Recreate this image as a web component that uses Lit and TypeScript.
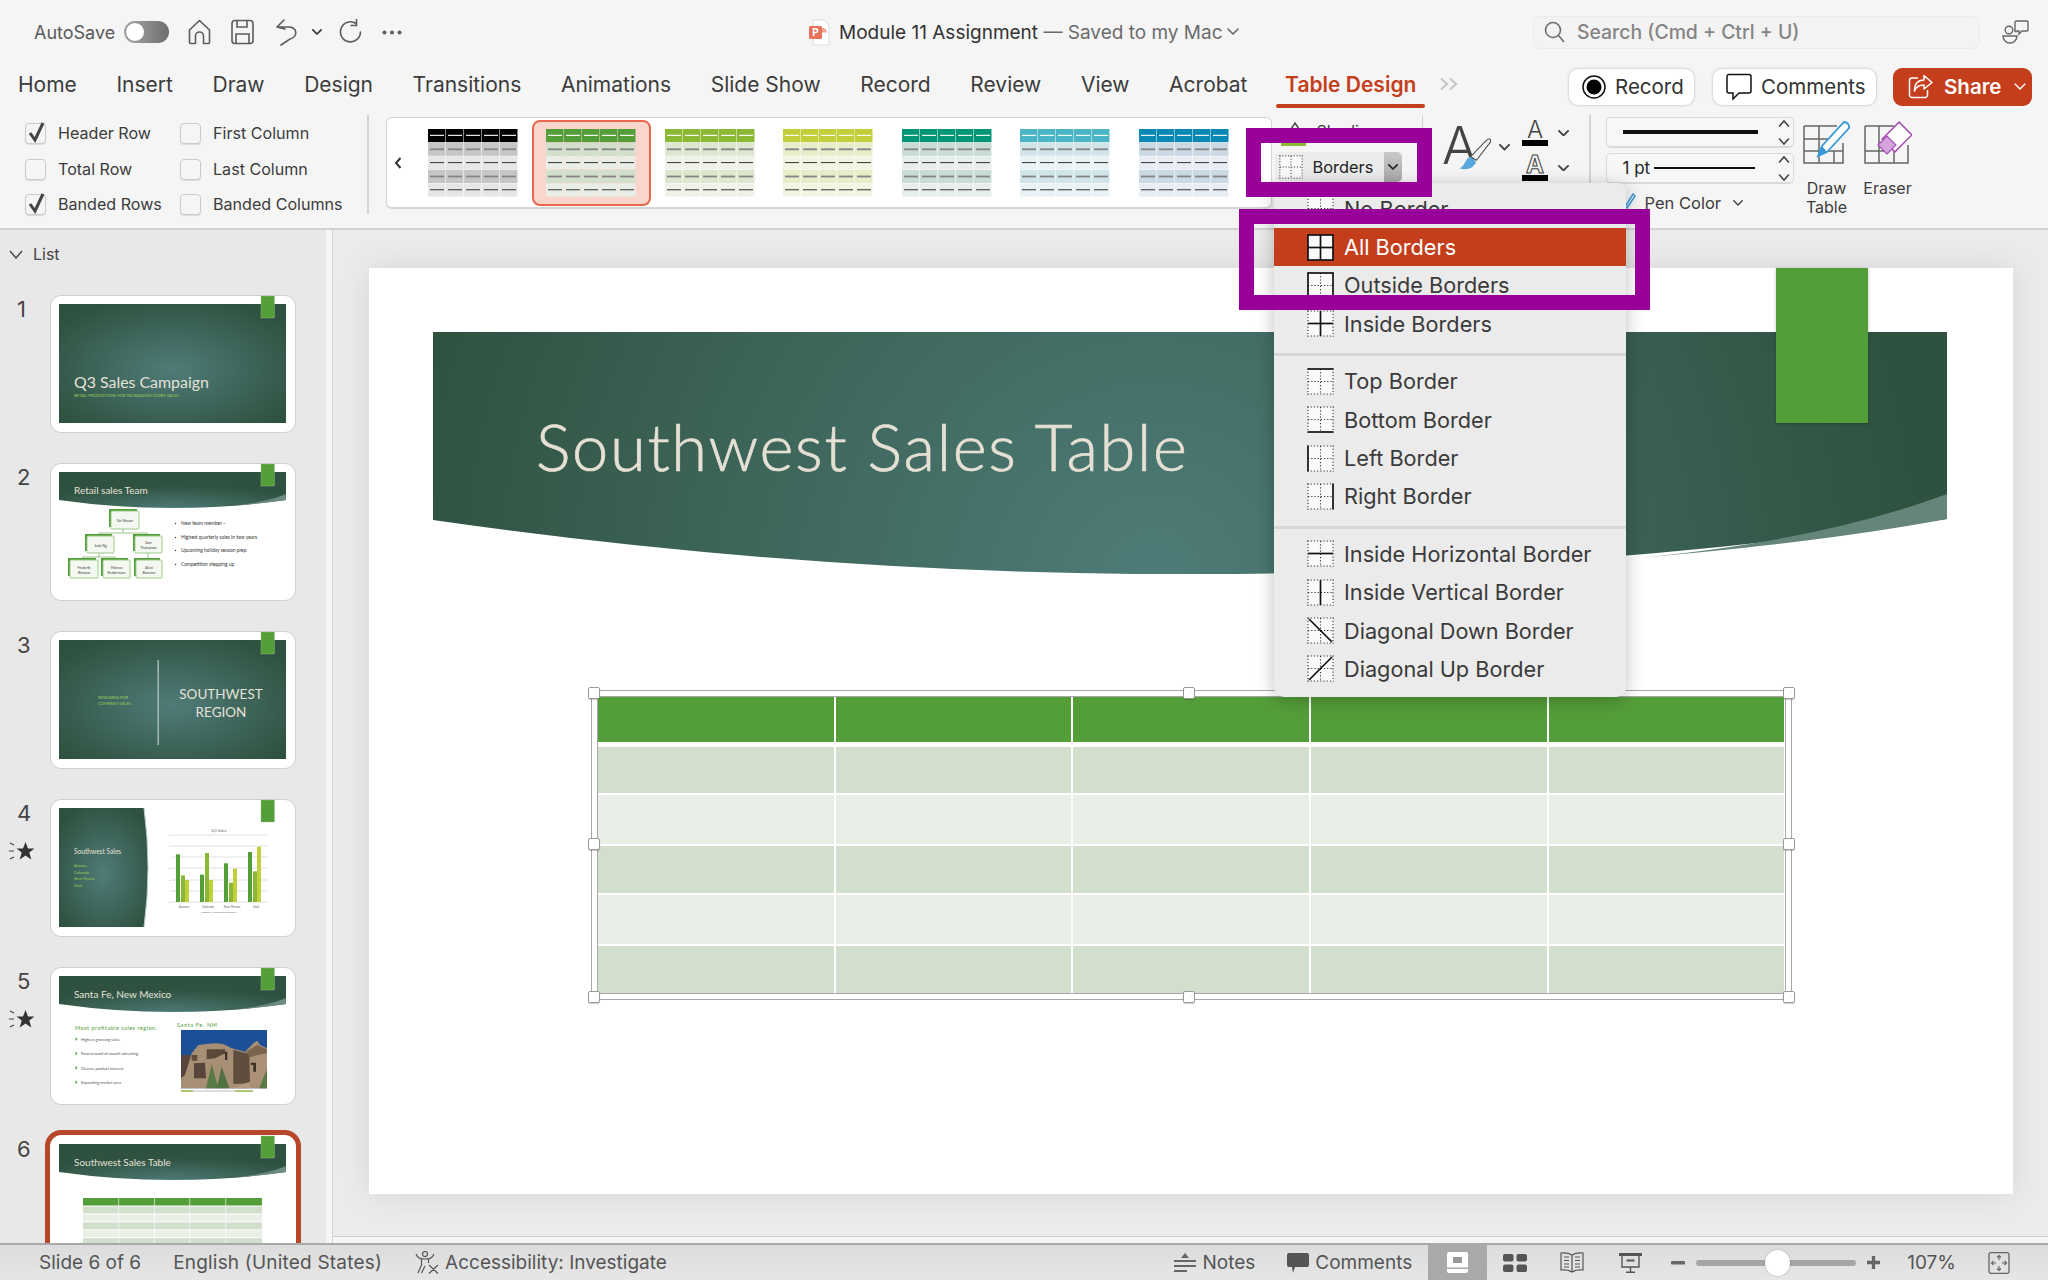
import { LitElement, html, svg, css } from "lit";
import { customElement } from "lit/decorators.js";

const TABS = ["Home","Insert","Draw","Design","Transitions","Animations","Slide Show","Record","Review","View","Acrobat"];
const STYLES = [
  ["#000000","#c6c6c6","#e6e6e6"],
  ["#549e39","#d2dfcd","#e9efe7"],
  ["#8ab833","#dde6ce","#eef2e8"],
  ["#c0cf3a","#e8ecc9","#f3f5e3"],
  ["#029676","#cadcd6","#e7eeeb"],
  ["#4ab5c4","#d0e4ea","#e9f2f5"],
  ["#0989b1","#cbd9e4","#e7edf2"],
];
const tableThumb = (c: string[]) => html`<svg class="tthumb" viewBox="0 0 90 68" width="90" height="68">
  ${[0,1,2,3,4].map(r => svg`${[0,1,2,3,4].map(k => svg`<rect x="${k*18}" y="${r*13.6}" width="17.5" height="13.2" fill="${r===0?c[0]:r%2?c[1]:c[2]}"/>
      <rect x="${k*18+2}" y="${r*13.6+5.8}" width="14" height="${r%2?1.8:1.1}" fill="${r===0?'#fff':r%2?'#858585':'#444'}"/>`)}`)}
</svg>`;

const borderIcon = (solid: string) => {
  const has = (k: string) => solid.includes(k);
  const ln = (k: string, x1: number, y1: number, x2: number, y2: number) =>
    has(k) ? svg`<line x1="${x1}" y1="${y1}" x2="${x2}" y2="${y2}" stroke="#111" stroke-width="1.7"/>`
           : (k==="d"||k==="u") ? null
           : svg`<line x1="${x1}" y1="${y1}" x2="${x2}" y2="${y2}" stroke="#333" stroke-width="1.100" stroke-dasharray="1.200 2"/>`;
  return html`<svg class="bicon" viewBox="0 0 27 27" width="27" height="27">
    <rect x="1" y="1" width="25" height="25" fill="#fafafa"/>
    ${ln("H",1,13.5,26,13.5)}${ln("V",13.5,1,13.5,26)}
    ${ln("T",0.5,1,26.5,1)}${ln("B",0.5,26,26.5,26)}${ln("L",1,0.5,1,26.5)}${ln("R",26,0.5,26,26.5)}
    ${ln("d",2,2,25,25)}${ln("u",25,2,2,25)}
  </svg>`;
};

const MENU: [string, string][][] = [
  [["No Border",""],["All Borders","TBLRHV"],["Outside Borders","TBLR"],["Inside Borders","HV"]],
  [["Top Border","T"],["Bottom Border","B"],["Left Border","L"],["Right Border","R"]],
  [["Inside Horizontal Border","H"],["Inside Vertical Border","V"],["Diagonal Down Border","d"],["Diagonal Up Border","u"]],
];

const chev = (w = 12, color = "#444", sw = 1.8) => html`<svg class="chev" width="${w}" height="${w*0.6}" viewBox="0 0 12 7.2"><path d="M1 1l5 5 5-5" fill="none" stroke="${color}" stroke-width="${sw}" stroke-linecap="round" stroke-linejoin="round"/></svg>`;
const spin = () => html`<svg class="spin" width="12" height="30" viewBox="0 0 12 30"><path d="M1.5 8l4.5-5 4.5 5M1.5 21l4.5 5 4.5-5" fill="none" stroke="#444" stroke-width="1.6" stroke-linecap="round"/></svg>`;

const DEFS = svg`<defs>
  <radialGradient id="g1" cx="50%" cy="55%" r="62%"><stop offset="0" stop-color="#4f7b78"/><stop offset="1" stop-color="#2f5240"/></radialGradient>
  <radialGradient id="g2" cx="50%" cy="100%" r="62%"><stop offset="0" stop-color="#4c7873"/><stop offset="1" stop-color="#2f5240"/></radialGradient>
</defs>`;
const TAB = svg`<rect x="202" y="-8" width="13.5" height="22" fill="#549e39" stroke="#9bb98f" stroke-width=".4"/>`;
const band = (title: string) => svg`<path d="M0 0H227V28Q113 44 0 28Z" fill="url(#g2)"/><path d="M170 34Q205 31 227 22V28Q200 32 170 34Z" fill="#6b8a80"/>
  <text x="15" y="22" class="t-title" font-size="10">${title}</text>`;

const orgBox = (x: number, y: number, w: number, h: number, lines: string[]) => svg`
  <rect x="${x-2}" y="${y-2}" width="${w-2}" height="${h-2}" fill="#4f9c38"/>
  <rect x="${x}" y="${y}" width="${w-2}" height="${h-2}" fill="#f3f8f1" stroke="#9ccb8a" stroke-width="1" rx="1"/>
  ${lines.map((l, i) => svg`<text x="${x+(w-2)/2}" y="${y+h/2+(i-(lines.length-1)/2)*5+1}" text-anchor="middle" font-size="3.6" fill="#444" class="t-s">${l}</text>`)}`;

// photo coordinates are measured on the reference crop
const pts = (a: number[]) => { const o: string[] = []; for (let i = 0; i < a.length; i += 2) o.push(`${(a[i]/3+111).toFixed(1)},${(a[i+1]/3+44).toFixed(1)}`); return o.join(" "); };
const poly = (a: number[], fill: string) => svg`<polygon points="${pts(a)}" fill="${fill}"/>`;
const PHOTO = svg`
  ${poly([33,30,291,30,291,205,33,205], "#1d4f96")}
  ${poly([33,105,62,105,62,175,33,175], "#57443a")}
  ${poly([33,205,33,175,45,165,65,100,85,75,110,72,135,70,160,72,185,85,225,95,250,70,262,62,270,75,291,85,291,205], "#a78f76")}
  ${poly([110,88,165,88,165,100,135,115,110,118], "#5a4839")}
  ${poly([65,105,82,105,82,122,65,122], "#5f4c3c")}
  ${poly([72,130,105,128,108,175,72,175], "#57443a")}
  ${poly([190,90,238,102,240,190,190,192], "#5f4d3e")}
  ${poly([228,95,262,75,291,88,291,100,240,112], "#7a644f")}
  ${poly([240,112,291,100,291,205,240,190], "#ab9178")}
  ${poly([242,128,258,128,258,155,250,155,250,135,242,135], "#3d3027")}
  ${poly([160,95,172,95,172,120,165,120,165,100,160,100], "#3d3027")}
  ${poly([180,205,240,185,240,205], "#b19a80")}
  ${poly([108,205,125,132,145,205], "#5a7a44")}
  ${poly([140,205,155,140,178,205], "#4f7040")}
  ${poly([268,205,283,165,291,150,291,205], "#5a7a44")}
  <rect x="122" y="114.500" width="72" height="1" fill="#bbb"/><rect x="122" y="114.500" width="12" height="1.200" fill="#8ab833"/><rect x="176" y="114.500" width="18" height="1.200" fill="#8ab833"/>`;

const slides = [
  svg`<rect width="227" height="119" fill="url(#g1)"/><text x="15" y="84" class="t-title" font-size="15.900">Q3 Sales Campaign</text>
    <text x="15" y="93" font-size="4.2" fill="#9ccb5c" class="t-s">RETAIL PROMOTIONS FOR INCREASING STORE SALES</text>`,
  svg`${band("Retail sales Team")}
    <g stroke="#7fb86a" stroke-width=".8" fill="none"><path d="M64 56v5M40 64v-3h48v3M40 81v4M24 87v-2h32v2M89 81v6"/></g>
    ${orgBox(52,39,30,20,["Siri Novari"])}${orgBox(28,64,29,19,["Judy Ng"])}${orgBox(76,64,29,19,["Sam","Thompson"])}
    ${orgBox(11,88,30,20,["Frederik","Bristow"])}${orgBox(44,88,29,20,["Marcus","Redderman"])}${orgBox(77,88,28,20,["Alexi","Baranov"])}
    ${["New team member –","Highest quarterly sales in two years","Upcoming holiday season prep","Competition stepping up"].map((t,i)=>svg`<circle cx="116.5" cy="${[53,67,80,94][i]-1.500}" r=".7" fill="#333"/><text x="122" y="${[53,67,80,94][i]}" font-size="4.9" fill="#333" class="t-s">${t}</text>`)}`,
  svg`<rect width="227" height="119" fill="url(#g1)"/><rect x="98.5" y="20" width="1.4" height="85" fill="#a8bfba"/>
    <text x="39" y="59" font-size="4.1" fill="#9ccb5c" class="t-s">NEW AREA FOR</text><text x="39" y="65" font-size="4.1" fill="#9ccb5c" class="t-s">COMPANY SALES</text>
    <text x="162" y="59" text-anchor="middle" font-size="13.5" class="t-title">SOUTHWEST</text><text x="162" y="77" text-anchor="middle" font-size="13.5" class="t-title">REGION</text>`,
  svg`<path d="M0 0H85Q93 60 85 119H0Z" fill="url(#g1)"/><path d="M85 0Q93 60 85 119" fill="none" stroke="#b9cbc6" stroke-width="1"/>
    <text x="15" y="46" class="t-title" font-size="6.6">Southwest Sales</text>
    ${["Arizona","Colorado","New Mexico","Utah"].map((t,i)=>svg`<text x="15" y="${59+i*6.7}" font-size="3.8" fill="#9ccb5c" class="t-s">${t}</text>`)}
    <text x="160" y="24" text-anchor="middle" font-size="4" fill="#666" class="t-s">Q3 Sales</text>
    ${[27,38,49,60,72,83,94].map((y,i)=>svg`<rect x="113" y="${y-.6}" width="96" height="1.200" fill="#e4e4e4"/><text x="110" y="${y+1}" font-size="2.6" fill="#777" class="t-s">${6-i}</text>`)}
    ${[[117,703,"#549e39"],[122,766,"#8ab833"],[126,780,"#c0cf3a"],[141,764,"#549e39"],[146,699,"#8ab833"],[150,780,"#c0cf3a"],[165,730,"#549e39"],[170,788,"#8ab833"],[174,746,"#c0cf3a"],[189,696,"#549e39"],[194,754,"#8ab833"],[198,680,"#c0cf3a"]].map(([x,y,c])=>{const t=(y as number)/3+620-808;return svg`<rect x="${x}" y="${t}" width="4" height="${94-t}" fill="${c}"/>`})}
    ${[["Arizona",125],["Colorado",149],["New Mexico",173],["Utah",197]].map(([t,x])=>svg`<text x="${x}" y="100" text-anchor="middle" font-size="3" fill="#666" class="t-s">${t}</text>`)}
    <text x="160" y="105" text-anchor="middle" font-size="2.6" fill="#666" class="t-s">Product A  Product B  Product C</text>`,
  svg`${band("Santa Fe, New Mexico")}
    <text x="16" y="54" font-size="5.6" fill="#549e39" class="t-s" textLength="82">Most profitable sales region.</text>
    <text x="118" y="51" font-size="5.6" fill="#549e39" class="t-s" textLength="40">Santa Fe, NM</text>
    ${["Highest grossing sales.","Fastest word of mouth adverting.","Diverse product interest","Expanding market area"].map((t,i)=>svg`<path d="M16.5 ${61+i*14.4}l2 2-2 2z" fill="#549e39"/><text x="22" y="${65+i*14.4}" font-size="4" fill="#555" class="t-s">${t}</text>`)}
    ${PHOTO}`,
  svg`${band("Southwest Sales Table")}
    <rect x="24" y="54" width="179" height="7.5" fill="#549e39"/>
    ${[0,1,2,3,4,5].map(i=>svg`<rect x="24" y="${62.5+i*7.9}" width="179" height="7" fill="${i%2?'#e9efe7':'#d2dfcd'}"/>`)}
    ${[59.5,95,130.5,166.5].map(x=>svg`<rect x="${x}" y="54" width=".6" height="60" fill="#fff"/>`)}`,
];
const numbers = [1,2,3,4,5,6];

@customElement("app-root")
export class AppRoot extends LitElement {
  static styles = css`
    :host { display: block; width: 2048px; height: 1280px; overflow: hidden; position: relative; background: #f5f5f5;
      font-family: Inter, "Liberation Sans", sans-serif; color: #333; }
    * { box-sizing: border-box; }
    svg { display: block; flex: none; }
    .app { display: flex; flex-direction: column; height: 1280px; }

    .titlebar { height: 60px; display: grid; grid-template-columns: 809px 724px 1fr; align-items: center; padding-top: 4px; }
    .tb-left { display: flex; align-items: center; padding-left: 34px; color: #5a5a5a; font-size: 18px; }
    .toggle { width: 45px; height: 22px; border-radius: 11px; background: linear-gradient(90deg,#aaa,#6d6d6d); margin: 0 19px 0 9px; padding: 1px; position: relative; }
    .toggle i { display: block; width: 20px; height: 20px; border-radius: 50%; background: #fff; border: 1px solid #888; }
    .tb-left .i1 { margin-right: 20px; }
    .tb-left .i2 { margin-right: 22px; }
    .undo-c { margin: 0 17px 0 14px; }
    .tb-center { display: flex; align-items: center; font-size: 19px; gap: 9px; color: #333; }
    .tb-center .saved { color: #6b6b6b; }
    .tb-center .chev { margin-left: -5px; }
    .tb-right { display: flex; align-items: center; }
    .search { width: 447px; height: 33px; border-radius: 8px; background: #f3f3f3; border: 1px solid #ebebeb; display: flex; align-items: center; padding-left: 10px; gap: 12px; color: #858585; font-size: 19.400px; font-weight: 500; }
    .people { margin-left: 22px; }

    .tabs { height: 48px; display: flex; align-items: center; padding-left: 18px; gap: 39.600px; font-size: 21px; color: #3c3c3c; }
    .tab-active { color: #c43e1c; font-weight: 600; position: relative; margin-left: -2px; }
    .tab-active::after { content: ""; position: absolute; left: -9px; right: -9px; bottom: -11px; height: 4px; border-radius: 2px; background: #c43e1c; }
    .more { margin-left: -17px; }
    .actions { margin-left: auto; display: flex; gap: 19px; padding-right: 16px; align-items: center; padding-top: 5px; }
    .abtn { height: 36px; background: #fff; border-radius: 9px; box-shadow: 0 0 3px rgba(0,0,0,.28); display: flex; align-items: center; font-size: 20.500px; padding-left: 13px; gap: 9px; color: #333; }
    .abtn.rec { width: 125px; }
    .abtn.com { width: 163px; }
    .abtn.share { width: 139px; height: 38px; background: #c43e1c; color: #fff; font-weight: 600; padding-left: 15px; gap: 11px; box-shadow: none; margin-left: -2px; }
    .share-c { margin-left: 2px; }

    .ribbon { height: 122px; border-bottom: 2px solid #d2d2d2; display: flex; align-items: flex-start; font-size: 16.100px; color: #3c3c3c; }
    .checks { margin: 15px 0 0 25px; width: 342px; display: grid; grid-template-columns: 155px 1fr; grid-auto-rows: 35.500px; }
    .check { display: flex; align-items: flex-start; gap: 12px; line-height: 21px; height: 21px; }
    .box { width: 21px; height: 21px; border: 1px solid #cbcbcb; border-radius: 4px; background: #f5f5f5; box-shadow: 0 1px 1px rgba(0,0,0,.1); position: relative; }
    .box svg { position: absolute; left: 2px; top: -3px; }
    .vsep { width: 1.500px; height: 99px; background: #d4d4d4; margin-top: 7px; }
    .gallery { width: 886px; height: 92px; margin: 9px 0 0 17px; background: #fff; border: 1px solid #d4d4d4; border-bottom-width: 2px; border-radius: 6px; display: flex; align-items: center; padding-left: 7px; }
    .gchev { width: 20px; }
    .gitem { width: 118.500px; height: 86px; display: flex; align-items: center; justify-content: center; border: 2px solid transparent; border-radius: 8px; }
    .gitem.sel { background: #fad5cc; border-color: #e8674f; }
    .group-b { width: 150px; padding: 12px 0 0 3px; flex: none; }
    .shade { height: 23px; display: flex; align-items: flex-start; gap: 14px; padding-left: 12px; font-size: 16px; line-height: 18px; padding-top: 2px; }
    .gbar { width: 25px; height: 3px; margin-left: 6px; background: #8ab833; }
    .bbtn { width: 127px; height: 30px; margin-top: 6px; border-radius: 5px; background: #ececec; display: flex; align-items: center; padding-left: 4px; }
    .bbtn .bicon { width: 24px; height: 24px; }
    .bbtn span { margin-left: 10px; font-size: 16.400px; width: 71px; color: #222; }
    .bbtn b { width: 18px; height: 30px; background: linear-gradient(#c9c9c9,#a8a8a8); border-radius: 0 5px 5px 0; display: flex; align-items: center; justify-content: center; }
    .quick { width: 166px; position: relative; height: 100px; }
    .abig { position: absolute; left: 19px; top: 12px; font-size: 52px; font-weight: 300; line-height: 1; color: #444; }
    .brush { position: absolute; left: 33px; top: 30px; }
    .qlabel { position: absolute; left: 32px; top: 72px; font-size: 16.500px; }
    .qchev { position: absolute; left: 76px; top: 36px; }
    .acol { position: absolute; left: 99px; top: 12px; display: flex; flex-direction: column; gap: 9px; }
    .aline { display: flex; align-items: center; gap: 10px; }
    .aglyph { width: 26px; font-size: 24px; line-height: 20px; text-align: center; border-bottom: 6px solid #000; height: 26px; color: #444; font-weight: 300; }
    .aglyph.o { color: #f5f5f5; -webkit-text-stroke: 1px #444; font-weight: 700; }
    .lines { width: 188px; margin: 9px 0 0 15px; flex: none; }
    .lbox { height: 31px; background: #f7f7f7; border: 1px solid #dadada; border-bottom-width: 2px; border-radius: 5px; display: flex; align-items: center; padding-left: 16px; position: relative; margin-bottom: 5px; color: #222; font-size: 17px; gap: 4px; }
    .lbox .bar { width: 135px; height: 4px; background: #111; }
    .lbox .bar2 { width: 101px; height: 2px; background: #111; }
    .lbox .spin { position: absolute; right: 3px; top: 0; }
    .pencol { display: flex; align-items: center; margin-top: 9px; padding-left: 18px; gap: 9px; font-size: 16.500px; }
    .pencol .chev { margin-left: 3px; }
    .tool { flex: none; display: flex; flex-direction: column; align-items: center; text-align: center; line-height: 19px; padding-top: 13px; gap: 14px; font-size: 16px; }
    .tool.t1 { width: 48px; margin-left: 9px; }
    .tool.t2 { width: 52px; margin-left: 11px; }

    .body { flex: 1; display: flex; min-height: 0; }
    .panel { width: 326px; background: #e8e8e8; overflow: hidden; flex: none; }
    .pstrip { width: 7px; flex: none; background: #f5f5f5; border-right: 1px solid #d4d4d4; }
    .list { height: 48px; display: flex; align-items: center; padding: 0 0 0 9px; gap: 10px; font-size: 16px; color: #444; }
    .list-pad { height: 17px; }
    .srow { display: flex; height: 168px; }
    .snum { width: 50px; position: relative; font-size: 22px; color: #444; padding-left: 17px; padding-top: 1px; line-height: 26px; }
    .star { position: absolute; left: 9px; top: 42px; }
    .card { width: 246px; height: 138px; background: #fff; border: 1.500px solid #d0d0d0; border-radius: 11px; padding: 7.500px; position: relative; }
    .card.sel { box-shadow: 0 0 0 5px #b7472a; border-color: #fff; }
    .thumb { overflow: visible; }
    .t-title { fill: #e6e2d8; font-family: Lato, sans-serif; font-weight: 400; }
    .t-s { font-family: Lato, sans-serif; }

    .main { flex: 1; min-width: 0; display: flex; flex-direction: column; }
    .canvas { flex: 1; background: #ebebeb; overflow: hidden; padding: 38px 0 0 36px; }
    .slide { width: 1644px; height: 926px; background: #fff; position: relative; box-shadow: 0 0 30px rgba(0,0,0,.09); padding: 64px 0 0 64px; }
    .banner { position: relative; width: 1514px; height: 242px; }
    .title { position: absolute; left: 103px; top: 75px; font-family: Lato, sans-serif; font-weight: 300; -webkit-text-stroke: 0.700px #e6e0d4; font-size: 65px; line-height: 78px; color: #e6e0d4; white-space: nowrap; letter-spacing: 1.650px; }
    .gtab { position: absolute; left: 1407px; top: 0; width: 92px; height: 155px; background: #549e39; box-shadow: 0 1px 3px rgba(0,0,0,.25); }
    .tablewrap { position: relative; margin: 123px 0 0 165px; width: 1188px; }
    .grid { display: grid; grid-template-columns: repeat(5, 235.700px); column-gap: 2px; }
    .cell { background: #d2dfcd; }
    .cell.h { height: 45px; background: #549e39; margin-bottom: 5px; }
    .cell.l { background: #e9efe7; }
    .cell.r1 { height: 46px; margin-bottom: 2px; }
    .cell.r2 { height: 49px; margin-bottom: 2px; }
    .cell.r3 { height: 47px; margin-bottom: 2px; }
    .cell.end { margin-bottom: 0; }
    .frame { position: absolute; left: -7px; top: -7px; right: -6px; bottom: -7px; border: 1px solid #a8a8a8; box-shadow: inset 0 0 0 5px #fff, inset 0 0 0 6px #a8a8a8; }
    .hd { position: absolute; width: 12px; height: 12px; background: #fff; border: 1px solid #999; border-radius: 2px; box-shadow: 0 1px 1px rgba(0,0,0,.2); }
    .hd.x0 { left: -10px; } .hd.x1 { left: 585px; } .hd.x2 { right: -9px; }
    .hd.y0 { top: -10px; } .hd.y1 { top: 141px; } .hd.y2 { bottom: -10px; }
    .mstrip { height: 7px; background: #f5f5f5; border-top: 1px solid #cdcdcd; flex: none; }

    .status { height: 37px; flex: none; border-top: 2px solid #a9a9a9; background: linear-gradient(#dcdcdc,#e6e6e6); display: flex; align-items: center; padding-left: 39px; color: #555; font-size: 19px; }
    .status .lang { margin-left: 32px; letter-spacing: 0.200px; }
    .status .acc { margin-left: 33px; display: flex; align-items: center; gap: 6px; }
    .status .rt { margin-left: auto; display: flex; align-items: center; height: 100%; padding-right: 38px; }
    .si { display: flex; align-items: center; gap: 6px; }
    .si.c { margin: 0 16px 0 32px; }
    .view { height: 100%; display: flex; align-items: center; justify-content: center; }
    .view.w59 { width: 59px; } .view.w56 { width: 56px; } .view.w58 { width: 58px; }
    .view.on { background: #a9a9a9; }
    .zminus { margin-left: 12px; }
    .slider { width: 160px; height: 6px; border-radius: 3px; background: #a5a5a5; position: relative; margin: 0 11px; }
    .slider i { position: absolute; left: 69px; top: -10px; width: 25px; height: 26px; border-radius: 50%; background: #fff; box-shadow: 0 0 2px rgba(0,0,0,.3); }
    .pct { margin: 0 32px 0 27px; }

    .menu { position: absolute; left: 1274px; top: 183px; width: 352px; height: 514px; background: #ebebeb; border-radius: 8px 8px 10px 10px; box-shadow: 0 3px 18px rgba(0,0,0,.25); padding-top: 6.500px; font-size: 21.700px; color: #3a3a3a; }
    .mi { height: 38.400px; display: flex; align-items: center; padding-left: 33px; gap: 10px; }
    .mi.on { background: #c43e1c; color: #fff; }
    .msep { height: 3px; background: #d6d6d6; margin: 10px 0 6px; }
    .pbox { position: absolute; border: 15px solid #990099; }
    .pbox.a { left: 1246px; top: 128px; width: 186px; height: 69px; }
    .pbox.b { left: 1239px; top: 209px; width: 411px; height: 101px; }
  `;

  render() {
    const stroke = "#5c5c5c";
    return html`<div class="app">
      <div class="titlebar">
        <div class="tb-left">AutoSave<div class="toggle"><i></i></div>
          <svg class="i1" width="23" height="26" viewBox="0 0 23 26"><path d="M1.5 11L11.5 1.5 21.5 11V23.5a1 1 0 0 1-1 1H15.5V17a4 4 0 0 0-8 0V24.5H2.500a1 1 0 0 1-1-1Z" fill="none" stroke="${stroke}" stroke-width="1.6" stroke-linejoin="round"/></svg>
          <svg class="i2" width="23" height="26" viewBox="0 0 23 26"><rect x="1" y="1.500" width="21" height="23" rx="3" fill="none" stroke="${stroke}" stroke-width="1.6"/><path d="M6 1.500V8H16V1.500M5 24.500V15H18V24.500" fill="none" stroke="${stroke}" stroke-width="1.6"/></svg>
          <svg width="22" height="28" viewBox="0 0 22 28"><path d="M1 9L8 2M1 9L9 11M1 9H12C22 9 22 19 14 21L5 27" fill="none" stroke="${stroke}" stroke-width="1.6" stroke-linecap="round"/></svg>
          <span class="undo-c">${chev(10,"#333",2)}</span>
          <svg class="i1" width="23" height="26" viewBox="0 0 23 26"><path d="M17 4.500A10 10 0 1 0 21.500 13M17.500 0.500V6.500H12" fill="none" stroke="${stroke}" stroke-width="1.6" stroke-linecap="round"/></svg>
          <svg width="20" height="5" viewBox="0 0 20 5"><circle cx="2.500" cy="2.500" r="2" fill="${stroke}"/><circle cx="10" cy="2.500" r="2" fill="${stroke}"/><circle cx="17.500" cy="2.500" r="2" fill="${stroke}"/></svg>
        </div>
        <div class="tb-center">
          <svg width="21" height="27" viewBox="0 0 21 27"><path d="M4 1H15L20 6V26H4Z" fill="#fff" stroke="#ddd"/><rect x="0" y="7" width="13" height="13" rx="1.500" fill="#e8735a"/><text x="6.500" y="17" text-anchor="middle" font-size="10" font-weight="700" fill="#fff" font-family="Inter">P</text><path d="M13 9A4.500 4.500 0 0 1 18 13.500H13Z" fill="#f3a18f"/></svg>
          <span>Module 11 Assignment <span class="saved">— Saved to my Mac</span></span>
          ${chev(12,"#666",1.6)}
        </div>
        <div class="tb-right">
          <div class="search">
            <svg width="21" height="22" viewBox="0 0 21 22"><circle cx="9" cy="9" r="7.500" fill="none" stroke="#6d6d6d" stroke-width="1.6"/><path d="M14.500 14.500L20 21" stroke="#6d6d6d" stroke-width="1.6"/></svg>
            Search (Cmd + Ctrl + U)
          </div>
          <svg class="people" width="27" height="26" viewBox="0 0 27 26"><circle cx="7" cy="11" r="3.800" fill="none" stroke="#666" stroke-width="1.400"/><path d="M1 17H15A7 7 0 0 1 1 17Z" fill="none" stroke="#666" stroke-width="1.400"/><path d="M14 2H25A1 1 0 0 1 26 3V11A1 1 0 0 1 25 12H20L17 15V12H15A1 1 0 0 1 13 11V3Z" fill="#f5f5f5" stroke="#666" stroke-width="1.400"/></svg>
        </div>
      </div>

      <div class="tabs">
        ${TABS.map(t => html`<span>${t}</span>`)}
        <span class="tab-active">Table Design</span>
        <svg class="more" width="20" height="14" viewBox="0 0 20 14"><path d="M2 1.500L8 7L2 12.500M11 1.500L17 7L11 12.500" fill="none" stroke="#c6c6c6" stroke-width="2.200"/></svg>
        <div class="actions">
          <div class="abtn rec"><svg width="24" height="24" viewBox="0 0 24 24"><circle cx="12" cy="12" r="11" fill="none" stroke="#111" stroke-width="1.500"/><circle cx="12" cy="12" r="7.500" fill="#000"/></svg>Record</div>
          <div class="abtn com"><svg width="26" height="28" viewBox="0 0 26 28"><path d="M3 1.500H23A2 2 0 0 1 25 3.500V18A2 2 0 0 1 23 20H13L7 26V20H3A2 2 0 0 1 1 18V3.500A2 2 0 0 1 3 1.500Z" fill="none" stroke="#111" stroke-width="1.500"/></svg>Comments</div>
          <div class="abtn share"><svg width="25" height="25" viewBox="0 0 25 25"><path d="M10 4H4A2.500 2.500 0 0 0 1.500 6.500V21A2.500 2.500 0 0 0 4 23.500H17A2.500 2.500 0 0 0 19.500 21V16" fill="none" stroke="#fff" stroke-width="1.500"/><path d="M16 1.500L24 8.500L16 15V11C11 11 8 13 6.500 17C6.500 10 10 6 16 6Z" fill="none" stroke="#fff" stroke-width="1.500" stroke-linejoin="round"/></svg>Share<span class="share-c">${chev(12,"#fff",1.4)}</span></div>
        </div>
      </div>

      <div class="ribbon">
        <div class="checks">
          ${[["Header Row",1],["First Column",0],["Total Row",0],["Last Column",0],["Banded Rows",1],["Banded Columns",0]].map(([t,c]) => html`
            <div class="check"><div class="box">${c ? html`<svg width="17" height="22" viewBox="0 0 17 22"><path d="M2 12L7 19L15 2" fill="none" stroke="#444" stroke-width="3"/></svg>` : null}</div>${t}</div>`)}
        </div>
        <div class="vsep"></div>
        <div class="gallery">
          <div class="gchev"><svg width="8" height="14" viewBox="0 0 8 14"><path d="M6.500 2L2 7L6.500 12" fill="none" stroke="#333" stroke-width="2"/></svg></div>
          ${STYLES.map((s, i) => html`<div class="gitem ${i===1?'sel':''}">${tableThumb(s)}</div>`)}
        </div>
        <div class="group-b">
          <div class="shade"><svg width="16" height="18" viewBox="0 0 16 18"><path d="M8 1L14 10L8 15L2 10Z" fill="none" stroke="#444" stroke-width="1.400"/></svg>Shading</div>
          <div class="gbar"></div>
          <div class="bbtn">${borderIcon("")}<span>Borders</span><b>${chev(10,"#222",2)}</b></div>
        </div>
        <div class="vsep"></div>
        <div class="quick">
          <div class="abig">A</div>
          <svg class="brush" width="38" height="33" viewBox="0 0 48 46"><path d="M44 1C47 2 46 6 43 9L26 31L18 26L38 5C40 3 42 1 44 1Z" fill="#f5f5f5" stroke="#555" stroke-width="1.600"/><path d="M17 26L25 32C24 41 14 46 2 42C10 40 9 30 17 26Z" fill="#5aa7dd"/></svg>
          <div class="qchev">${chev(11,"#444",2)}</div>
          <div class="qlabel">Quick</div>
          <div class="acol">
            <div class="aline"><div class="aglyph">A</div>${chev(11,"#444",2)}</div>
            <div class="aline"><div class="aglyph o">A</div>${chev(11,"#444",2)}</div>
          </div>
        </div>
        <div class="vsep"></div>
        <div class="lines">
          <div class="lbox"><div class="bar"></div>${spin()}</div>
          <div class="lbox">1 pt<div class="bar2"></div>${spin()}</div>
          <div class="pencol"><svg width="12" height="20" viewBox="0 0 12 20"><path d="M9 1L11 3L3 15L1 14Z" fill="none" stroke="#3a9ad9" stroke-width="1.500"/></svg>Pen Color ${chev(10,"#444",1.800)}</div>
        </div>
        <div class="tool t1">
          <svg width="48" height="44" viewBox="0 0 48 44"><path d="M1 5H34M1 18H26M1 30H40M16 5V42M31 30V42M1 5V42H40V22" fill="none" stroke="#666" stroke-width="1.500"/><path d="M41 1C44 1 47 4 46 7L24 31L15 35L19 25Z" fill="#fff" stroke="#3a9ad9" stroke-width="1.800"/><path d="M19 25L24 31L15 35Z" fill="#3a9ad9"/></svg>
          <div>Draw<br />Table</div>
        </div>
        <div class="tool t2">
          <svg width="48" height="44" viewBox="0 0 48 44"><path d="M1 5H30M1 30H20M15 5V42M30 30V42M1 5V42H44V24" fill="none" stroke="#666" stroke-width="1.500"/><rect x="24" y="4" width="18" height="24" transform="rotate(45 33 16)" fill="#fff" stroke="#a24fb0" stroke-width="1.500"/><path d="M18 18L27 9L36 18L27 27Z" transform="translate(-4 6)" fill="#d6a4dc" stroke="#a24fb0" stroke-width="1.200"/></svg>
          <div>Eraser</div>
        </div>
      </div>

      <div class="body">
        <div class="panel">
          <div class="list"><svg width="14" height="9" viewBox="0 0 14 9"><path d="M1 1L7 8L13 1" fill="none" stroke="#444" stroke-width="1.400"/></svg>List</div>
          <div class="list-pad"></div>
          ${numbers.map((n, i) => html`<div class="srow">
            <div class="snum">${n}
              ${n === 4 || n === 5 ? html`<svg class="star" width="26" height="20" viewBox="0 0 26 20"><path d="M1 2L5 4M0 10H5M1 18L5 16" stroke="#444" stroke-width="1.200" fill="none"/><path d="M16.500 1L19 7.500H25.500L20.300 11.600L22.300 18.500L16.500 14.400L10.700 18.500L12.700 11.600L7.500 7.500H14Z" fill="#333"/></svg>` : null}
            </div>
            <div class="card ${n === 6 ? 'sel' : ''}">
              <svg class="thumb" width="227" height="119" viewBox="0 0 227 119">${i === 0 ? DEFS : null}${slides[i]}${TAB}</svg>
            </div>
          </div>`)}
        </div>
        <div class="pstrip"></div>
        <div class="main">
          <div class="canvas">
            <div class="slide">
              <div class="banner">
                <svg width="1514" height="242" viewBox="0 0 1514 242">
                  <defs><radialGradient id="mb" gradientUnits="userSpaceOnUse" cx="720" cy="250" r="760"><stop offset="0" stop-color="#4e7c78"/><stop offset="1" stop-color="#2f5240"/></radialGradient></defs>
                  <path d="M0 0H1514V187Q757 297 0 188Z" fill="url(#mb)"/>
                  <path d="M1180 228Q1380 212 1514 162V187Q1380 212 1180 228Z" fill="#65857b"/>
                </svg>
                <div class="title">Southwest Sales Table</div>
              </div>
              <div class="gtab"></div>
              <div class="tablewrap">
                <div class="grid">
                  ${[0,1,2,3,4].map(() => html`<div class="cell h"></div>`)}
                  ${[0,1,2,3,4].map(() => html`<div class="cell r1"></div>`)}
                  ${[0,1,2,3,4].map(() => html`<div class="cell l r2"></div>`)}
                  ${[0,1,2,3,4].map(() => html`<div class="cell r3"></div>`)}
                  ${[0,1,2,3,4].map(() => html`<div class="cell l r2"></div>`)}
                  ${[0,1,2,3,4].map(() => html`<div class="cell r3 end"></div>`)}
                </div>
                <div class="frame"></div>
                ${["x0 y0","x1 y0","x2 y0","x0 y1","x2 y1","x0 y2","x1 y2","x2 y2"].map(c => html`<div class="hd ${c}"></div>`)}
              </div>
            </div>
          </div>
          <div class="mstrip"></div>
        </div>
      </div>

      <div class="status">
        <span>Slide 6 of 6</span><span class="lang">English (United States)</span>
        <span class="acc"><svg width="24" height="23" viewBox="0 0 24 23"><circle cx="10" cy="3" r="2.500" fill="none" stroke="#555" stroke-width="1.200"/><path d="M1 3C3 8 6 8 10 8C14 8 17 8 19 3M6.500 8V14L3 22M13.500 8V12M10 15L6.500 22M14 14L23 22.500M23 14L14 22.500" fill="none" stroke="#555" stroke-width="1.200"/></svg>Accessibility: Investigate</span>
        <div class="rt">
          <div class="si"><svg width="22" height="19" viewBox="0 0 22 19"><path d="M11 0L15 5H7Z" fill="#666"/><path d="M0 8H22M0 13H22M0 18H13" stroke="#666" stroke-width="1.800"/></svg>Notes</div>
          <div class="si c"><svg width="22" height="20" viewBox="0 0 22 20"><path d="M2 0H20A2 2 0 0 1 22 2V12A2 2 0 0 1 20 14H8L6 20L5 14H2A2 2 0 0 1 0 12V2A2 2 0 0 1 2 0Z" fill="#555"/></svg>Comments</div>
          <div class="view w59 on"><svg width="21" height="21" viewBox="0 0 21 21"><rect x="0" y="0" width="21" height="21" rx="2" fill="#fff"/><rect x="6" y="5" width="9" height="6" fill="#999"/><rect x="0" y="15.500" width="21" height="1.500" fill="#a9a9a9"/></svg></div>
          <div class="view w56"><svg width="24" height="18" viewBox="0 0 24 18"><rect width="10.500" height="7.500" rx="2" fill="#555"/><rect x="13.500" width="10.500" height="7.500" rx="2" fill="#555"/><rect y="10.500" width="10.500" height="7.500" rx="2" fill="#555"/><rect x="13.500" y="10.500" width="10.500" height="7.500" rx="2" fill="#555"/></svg></div>
          <div class="view w58"><svg width="24" height="21" viewBox="0 0 24 21"><path d="M12 3C9 1 5 .7 1 1V18C5 17.700 9 18 12 20C15 18 19 17.700 23 18V1C19 .7 15 1 12 3ZM12 3V20M4 5H9M4 8.500H9M4 12H9M4 15H9M15 5H20M15 8.500H20M15 12H20M15 15H20" fill="none" stroke="#555" stroke-width="1.200"/></svg></div>
          <div class="view w58"><svg width="23" height="20" viewBox="0 0 23 20"><rect width="23" height="3" fill="#555"/><path d="M3 3V14H20V3M11.500 14V19M7 19.300H16" fill="none" stroke="#555" stroke-width="1.400"/><rect x="7.500" y="6.500" width="8" height="2" fill="#555"/></svg></div>
          <svg class="zminus" width="14" height="4" viewBox="0 0 14 4"><rect width="14" height="3.500" rx="1" fill="#666"/></svg>
          <div class="slider"><i></i></div>
          <svg width="13" height="13" viewBox="0 0 14 14"><path d="M0 5.200H14V8.800H0ZM5.200 0H8.800V14H5.200Z" fill="#666"/></svg>
          <span class="pct">107%</span>
          <svg width="22" height="22" viewBox="0 0 22 22"><rect x="1" y="0.700" width="20" height="20.600" rx="2" fill="none" stroke="#666" stroke-width="1.300"/><path d="M11 4V8M9 5.500L11 3.500L13 5.500M11 18V14M9 16.500L11 18.500L13 16.500M4 11H8M5.500 9L3.500 11L5.500 13M18 11H14M16.500 9L18.500 11L16.500 13" fill="none" stroke="#666" stroke-width="1.100"/></svg>
        </div>
      </div>

      <div class="menu">
        ${MENU.map((g, gi) => html`${gi ? html`<div class="msep"></div>` : null}
          ${g.map(([t, k]) => html`<div class="mi ${t === 'All Borders' ? 'on' : ''}">${borderIcon(k)}<span>${t}</span></div>`)}`)}
      </div>
      <div class="pbox a"></div>
      <div class="pbox b"></div>
    </div>`;
  }
}
